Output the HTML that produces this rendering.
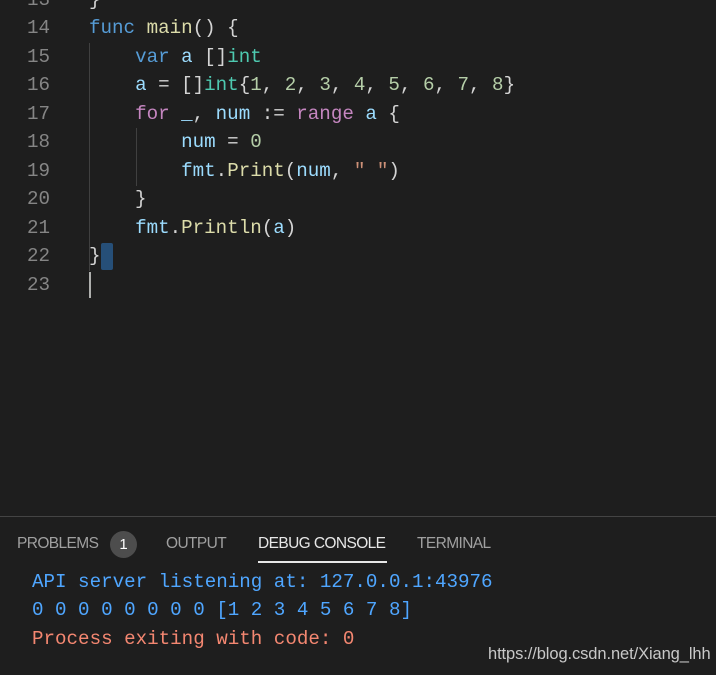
<!DOCTYPE html>
<html><head><style>
body{margin:0;width:716px;height:674px;background:#1e1e1e;overflow:hidden;position:relative;font-family:"Liberation Mono",monospace;}
.l{position:absolute;left:0;height:28px;font-size:19.2px;line-height:28px;white-space:pre;color:#d4d4d4}
.n{position:absolute;left:0;width:50px;text-align:right;color:#858585}
.c{position:absolute;left:89px}
.k{color:#569cd6}.f{color:#dcdcaa}.v{color:#9cdcfe}.t{color:#4ec9b0}.m{color:#b5cea8}.p{color:#c586c0}.s{color:#ce9178}
.g{position:absolute;width:1px;background:#404040}
.panel{position:absolute;left:0;top:516px;width:716px;height:158px;border-top:1px solid #444;background:#1e1e1e}
.tab{position:absolute;top:535px;font-family:"Liberation Sans",sans-serif;font-size:15.5px;color:#a0a0a0;letter-spacing:-0.6px}
.o{position:absolute;left:32px;font-size:19.2px;line-height:28px;white-space:pre}
</style></head><body>
<div class="g" style="left:89px;top:43px;height:228px"></div>
<div class="g" style="left:136px;top:128px;height:58px"></div>
<div class="l" style="top:-14px"><span class="n">13</span><span class="c">}</span></div>
<div class="l" style="top:14px"><span class="n">14</span><span class="c"><span class="k">func</span> <span class="f">main</span>() {</span></div>
<div class="l" style="top:43px"><span class="n">15</span><span class="c">    <span class="k">var</span> <span class="v">a</span> []<span class="t">int</span></span></div>
<div class="l" style="top:71px"><span class="n">16</span><span class="c">    <span class="v">a</span> = []<span class="t">int</span>{<span class="m">1</span>, <span class="m">2</span>, <span class="m">3</span>, <span class="m">4</span>, <span class="m">5</span>, <span class="m">6</span>, <span class="m">7</span>, <span class="m">8</span>}</span></div>
<div class="l" style="top:100px"><span class="n">17</span><span class="c">    <span class="p">for</span> <span class="v">_</span>, <span class="v">num</span> := <span class="p">range</span> <span class="v">a</span> {</span></div>
<div class="l" style="top:128px"><span class="n">18</span><span class="c">        <span class="v">num</span> = <span class="m">0</span></span></div>
<div class="l" style="top:157px"><span class="n">19</span><span class="c">        <span class="v">fmt</span>.<span class="f">Print</span>(<span class="v">num</span>, <span class="s">" "</span>)</span></div>
<div class="l" style="top:185px"><span class="n">20</span><span class="c">    }</span></div>
<div class="l" style="top:214px"><span class="n">21</span><span class="c">    <span class="v">fmt</span>.<span class="f">Println</span>(<span class="v">a</span>)</span></div>
<div style="position:absolute;left:101px;top:243px;width:12px;height:27px;background:#264f78;border-radius:2px"></div>
<div class="l" style="top:242px"><span class="n">22</span><span class="c">}</span></div>
<div class="l" style="top:271px"><span class="n">23</span></div>
<div style="position:absolute;left:89px;top:272px;width:2px;height:26px;background:#aeafad"></div>
<div class="panel"></div>
<div class="tab" style="left:17px">PROBLEMS</div>
<div style="position:absolute;left:110px;top:531px;width:27px;height:27px;border-radius:50%;background:#4d4d4d;color:#fff;font-family:'Liberation Sans',sans-serif;font-size:15px;text-align:center;line-height:27px">1</div>
<div class="tab" style="left:166px">OUTPUT</div>
<div class="tab" style="left:258px;color:#e7e7e7">DEBUG CONSOLE</div>
<div style="position:absolute;left:258px;top:561px;width:129px;height:2px;background:#e7e7e7"></div>
<div class="tab" style="left:417px">TERMINAL</div>
<div class="o" style="top:568px;color:#4fa6ff">API server listening at: 127.0.0.1:43976</div>
<div class="o" style="top:596px;color:#4fa6ff">0 0 0 0 0 0 0 0 [1 2 3 4 5 6 7 8]</div>
<div class="o" style="top:625px;color:#f48771">Process exiting with code: 0</div>
<div style="position:absolute;left:488px;top:645px;font-family:'Liberation Sans',sans-serif;font-size:16.5px;color:#c8c8c8;letter-spacing:-0.1px">https://blog.csdn.net/Xiang_lhh</div>
</body></html>
